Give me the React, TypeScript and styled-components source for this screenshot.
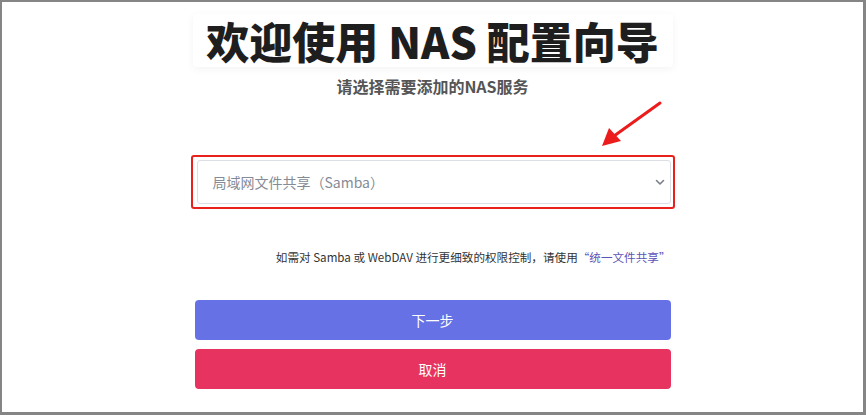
import React from "react";
import styled, { createGlobalStyle } from "styled-components";

const Global = createGlobalStyle`
  html, body { margin: 0; padding: 0; background: #fff; }
  body { font-family: "Noto Sans CJK SC", "Noto Sans", sans-serif; }
  * { box-sizing: border-box; }
`;

const Frame = styled.div`
  position: relative;
  width: 866px;
  height: 415px;
  border-style: solid;
  border-color: #858585;
  border-width: 2px 3px 3px 2px;
  background: #fff;
  display: flex;
  flex-direction: column;
  align-items: center;
  padding-top: 12px;
  overflow: hidden;
`;

const TitleBox = styled.div`
  width: 480px;
  height: 53px;
  display: flex;
  align-items: center;
  justify-content: center;
  background: #fff;
  box-shadow: 0 2px 8px rgba(0, 0, 0, 0.05);
  border-radius: 4px;
`;

const Title = styled.h1`
  margin: 0;
  font-family: "Noto Sans CJK SC", sans-serif;
  font-weight: 900;
  font-size: 43px;
  line-height: 1;
  color: #1e1e1e;
  white-space: nowrap;
`;

const Subtitle = styled.h2`
  margin: 8px 0 0;
  font-family: "Noto Sans CJK SC", sans-serif;
  font-weight: 700;
  font-size: 16px;
  line-height: 22px;
  color: #555;
`;

const Column = styled.div`
  width: 476px;
  display: flex;
  flex-direction: column;
  align-items: stretch;
`;

const Highlight = styled.div`
  margin: 58px -4px 0 -4px;
  padding: 3px 4px 3px 4px;
  border: 2.5px solid #e8211d;
  border-radius: 3px;
`;

const Select = styled.div`
  height: 44px;
  margin: 0 -2px 0 0;
  border: 1px solid #dcdfe6;
  border-radius: 3px;
  display: flex;
  align-items: center;
  justify-content: space-between;
  padding: 0 4px 0 15px;
  font-size: 14px;
  color: #858b96;
  background: #fff;
`;

const Info = styled.p`
  margin: 39px 0 0;
  text-align: right;
  font-size: 11.6px;
  line-height: 18px;
  color: #333;
  white-space: nowrap;
`;

const Link = styled.span`
  color: #5b54b8;
`;

const Button = styled.div<{ $bg: string; $mt: number }>`
  margin-top: ${(p) => p.$mt}px;
  height: 40px;
  border-radius: 4px;
  background: ${(p) => p.$bg};
  color: #fff;
  font-size: 14px;
  display: flex;
  align-items: center;
  justify-content: center;
`;

const Arrow = styled.svg`
  position: absolute;
  left: 594px;
  top: 97px;
`;

export default function App() {
  return (
    <>
      <Global />
      <Frame>
        <TitleBox>
          <Title>欢迎使用 NAS 配置向导</Title>
        </TitleBox>
        <Subtitle>请选择需要添加的NAS服务</Subtitle>
        <Column>
          <Highlight>
            <Select>
              <span>局域网文件共享（Samba）</span>
              <svg width="12" height="12" viewBox="0 0 12 12">
                <path d="M2.5 4.5 L6 8 L9.5 4.5" fill="none" stroke="#7a7f88" strokeWidth="1.6" strokeLinecap="round" strokeLinejoin="round" />
              </svg>
            </Select>
          </Highlight>
          <Info>
            如需对 Samba 或 WebDAV 进行更细致的权限控制，请使用<Link>“统一文件共享”</Link>
          </Info>
          <Button $bg="#6671e6" $mt={34}>下一步</Button>
          <Button $bg="#e6335f" $mt={9}>取消</Button>
        </Column>
        <Arrow width="70" height="52" viewBox="0 0 70 52">
          <line x1="64" y1="4" x2="18" y2="37" stroke="#ec1c1c" strokeWidth="3" strokeLinecap="round" />
          <polygon points="6,47 13,29 25,42" fill="#ec1c1c" />
        </Arrow>
      </Frame>
    </>
  );
}
